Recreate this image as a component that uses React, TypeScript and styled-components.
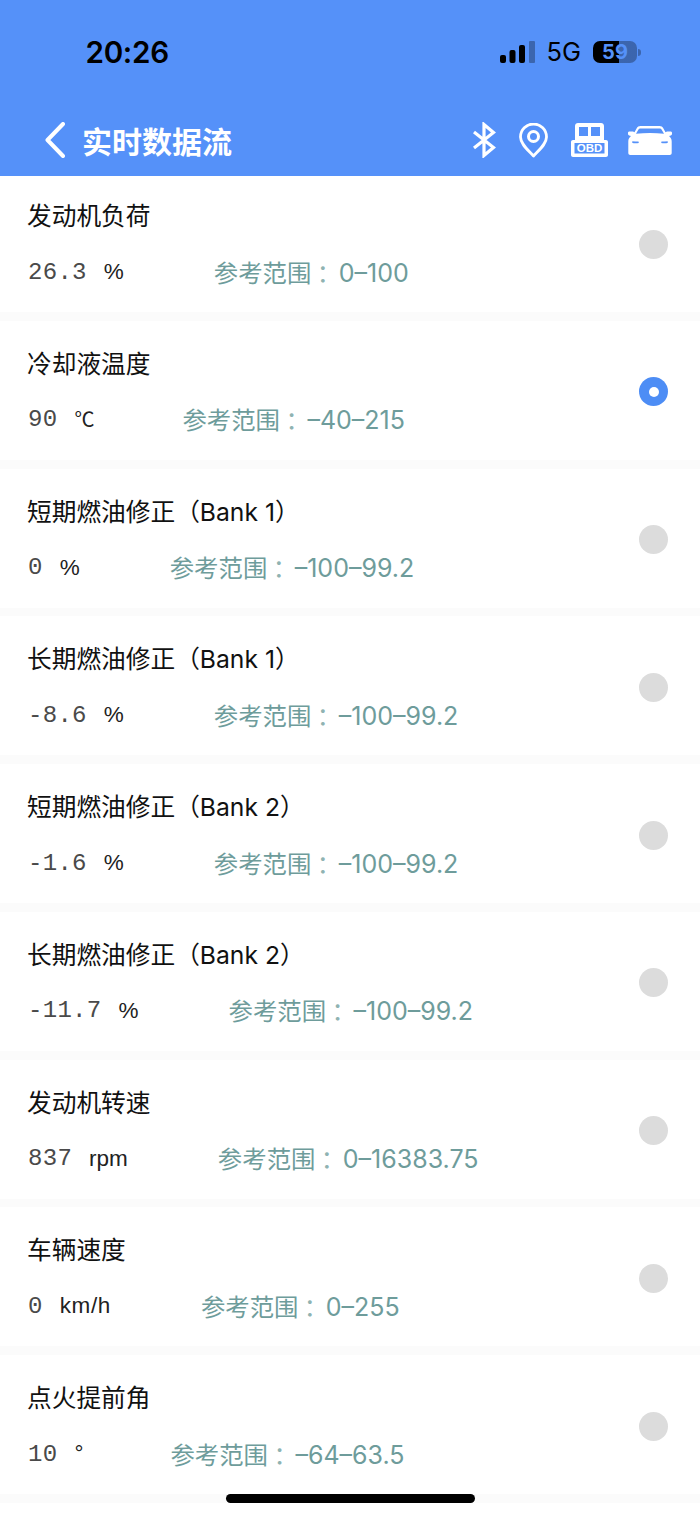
import React from 'react';
import styled, { createGlobalStyle } from 'styled-components';

const Global = createGlobalStyle`
  html, body { margin: 0; padding: 0; background: #fff; }
  body { width: 700px; height: 1517px; overflow: hidden; font-family: Inter, "Noto Sans CJK SC", sans-serif; }
`;
const Page = styled.div`position: relative; width: 700px; height: 1517px; background: #fff; overflow: hidden;`;
const Header = styled.header`height: 176px; background: #5591f9; display: flex; flex-direction: column;`;
const StatusBar = styled.div`height: 104px; display: flex; align-items: center; justify-content: space-between; padding: 0 59px 0 85.5px; box-sizing: border-box;`;
const Time = styled.div`font: 600 29.6px/1 Inter, sans-serif; color: #000; letter-spacing: -.3px; padding-top: 1px;`;
const StatusRight = styled.div`display: flex; align-items: center;`;
const Network = styled.div`font: 400 25.5px/1 Inter, sans-serif; color: #000; margin: 0 12px 0 11px;`;
const Battery = styled.div`
  width: 44px; height: 22px; border-radius: 7px; display: flex; align-items: center; justify-content: center;
  background: linear-gradient(90deg, #000 0 59%, rgba(0,0,0,.3) 59% 100%);
  font: 700 20px/1 Inter, sans-serif; color: #5591f9;
`;
const BatteryTip = styled.div`width: 3px; height: 7px; margin-left: 1px; border-radius: 0 3px 3px 0; background: rgba(0,0,0,.3);`;
const NavBar = styled.nav`flex: 1; display: flex; align-items: center; padding: 0 28px 0 45px;`;
const NavTitle = styled.h1`margin: 0 0 0 17px; flex: 1; font: 700 30px/1 "Noto Sans CJK SC", sans-serif; color: #fff;`;
const NavIcons = styled.div`display: flex; align-items: center; gap: 23px;`;
const List = styled.main`display: flex; flex-direction: column; gap: 8.75px; padding-bottom: 8.75px; background: #fbfbfb;`;
const Row = styled.section`
  display: flex; align-items: center; justify-content: space-between; background: #fff;
  padding: 26px 32px 23px 28px;
  &:first-child { padding-top: 23px; }
`;
const Info = styled.div`display: flex; flex-direction: column; gap: 22px;`;
const Title = styled.div`font: 400 24.7px/34px Inter, "Noto Sans CJK SC", sans-serif; color: #111; height: 34px; margin-left: -1px;`;
const ValueLine = styled.div`display: flex; align-items: center; height: 34px;`;
const Value = styled.span`font: 400 24px/34px "Liberation Mono", monospace; letter-spacing: .3px; color: #4a4a4a; margin-right: 17px; padding-top: 1px;`;
const Unit = styled.span<{ $size?: number; $track?: number }>`
  font: 400 ${p => p.$size ?? 22.5}px/34px "Liberation Sans", "Noto Sans CJK SC", sans-serif;
  letter-spacing: ${p => p.$track ?? 0}px;
  color: #222; margin-right: 90px;
`;
const Range = styled.span`font: 400 24.4px/34px "Noto Sans CJK SC", sans-serif; color: #6e9c9b; display: inline-flex; align-items: baseline;`;
const RangeColon = styled.span`width: 22px; padding-left: 5.400px; box-sizing: content-box; color: #8fb3b2;`;
const RangeNums = styled.span`font: 400 25px/34px Inter, sans-serif;`;
const Radio = styled.div<{ $on?: boolean }>`
  width: 29px; height: 29px; border-radius: 50%; flex: none; display: flex; align-items: center; justify-content: center;
  background: ${p => (p.$on ? '#4d8df5' : '#dcdcdc')};
  &::after { content: ''; width: 10px; height: 10px; border-radius: 50%; background: ${p => (p.$on ? '#fff' : 'transparent')}; }
`;
const HomeBar = styled.div`position: absolute; left: 226px; top: 1494px; width: 249px; height: 9px; border-radius: 5px; background: #000;`;
const ObdWrap = styled.div`position: relative; width: 37px; height: 34px; margin-right: -3px;`;
const ObdLabel = styled.span`position: absolute; left: 0; right: 0; bottom: 3px; text-align: center; font: 700 11.5px/12px "Liberation Sans", sans-serif; color: #fff;`;

const rows: { t: string; v: string; u: string; r: string; on?: boolean; size?: number; track?: number }[] = [
  { t: '发动机负荷', v: '26.3', u: '%', r: '0–100' },
  { t: '冷却液温度', v: '90', u: '℃', r: '–40–215', on: true, size: 20, track: -2 },
  { t: '短期燃油修正（Bank 1）', v: '0', u: '%', r: '–100–99.2' },
  { t: '长期燃油修正（Bank 1）', v: '-8.6', u: '%', r: '–100–99.2' },
  { t: '短期燃油修正（Bank 2）', v: '-1.6', u: '%', r: '–100–99.2' },
  { t: '长期燃油修正（Bank 2）', v: '-11.7', u: '%', r: '–100–99.2' },
  { t: '发动机转速', v: '837', u: 'rpm', r: '0–16383.75' },
  { t: '车辆速度', v: '0', u: 'km/h', r: '0–255', track: 0.6 },
  { t: '点火提前角', v: '10', u: '°', r: '–64–63.5', track: -3 },
];

const Signal = () => (
  <svg width="35" height="22" viewBox="0 0 35 22" style={{ marginLeft: 1 }}>
    <rect x="0" y="14" width="6" height="8" rx="2" fill="#000" />
    <rect x="9.500" y="9" width="6" height="13" rx="2" fill="#000" />
    <rect x="19" y="4" width="6" height="18" rx="2" fill="#000" />
    <rect x="29" y="0" width="6" height="22" rx="1" fill="#000" opacity=".3" />
  </svg>
);
const Chevron = () => (
  <svg width="20" height="36" viewBox="0 0 20 36" fill="none" stroke="#fff" strokeWidth="4" strokeLinecap="round" strokeLinejoin="round">
    <path d="M18 2 2.500 18 18 34" />
  </svg>
);
const BluetoothIcon = () => (
  <svg width="24" height="36" viewBox="0 0 24 36" fill="none" stroke="#fff" strokeWidth="3.200">
    <path d="M2 10 21.500 25.500 12 33.500V2.500l9.500 8L2 26" />
  </svg>
);
const Pin = () => (
  <svg width="29" height="35" viewBox="0 0 29 35" fill="none" stroke="#fff" strokeWidth="2.800">
    <path d="M14.500 33C9 27 1.500 21 1.500 14a13 13 0 0 1 26 0c0 7-7.500 13-13 19Z" strokeLinejoin="round" />
    <circle cx="14.500" cy="13.500" r="5" strokeWidth="3" />
  </svg>
);
const Obd = () => (
  <ObdWrap>
    <svg width="37" height="34" viewBox="0 0 37 34">
      <path
        fillRule="evenodd"
        fill="#fff"
        d="M7 0h23c1.700 0 3 1.300 3 3v14h2c1.100 0 2 .9 2 2v13c0 1.100-.9 2-2 2H2c-1.100 0-2-.9-2-2V19c0-1.100.9-2 2-2h2V3c0-1.700 1.300-3 3-3ZM8 4v9h9V4Zm12 0v9h9V4ZM3.500 20v10.500h30V20Z"
      />
    </svg>
    <ObdLabel>OBD</ObdLabel>
  </ObdWrap>
);
const Car = () => (
  <svg width="44" height="30" viewBox="0 -1 44 30">
    <path
      fillRule="evenodd"
      fill="#fff"
      d="M12.500 0h19c1.800 0 3 .8 3.800 2.300L37.500 6.200 39 5.500h3.500c.9 0 1.500.6 1.500 1.300V8c0 .9-.7 1.400-2 1.800l-1 .3c1.800 1.400 2.700 3.200 2.700 5.400V27c0 1.200-.8 2-2 2H2.300c-1.200 0-2-.8-2-2V15.500c0-2.200.9-4 2.700-5.400L2 9.800C.7 9.400 0 8.900 0 8V6.800C0 6.100.6 5.500 1.500 5.500H5l1.500.7 2.200-3.900C9.500.8 10.700 0 12.500 0Zm.2 2.400c-1.200 0-1.900.5-2.400 1.300L8 7.700c9-1 19-1 28 0l-2.300-4c-.5-.8-1.200-1.300-2.400-1.300ZM4.300 15.200v1.700c2.200.5 4.500.5 6.500 0l-.3-1.300c-2-.1-4.200-.2-6.200-.4Zm35.400 0c-2 .2-4.200.3-6.200.4l-.3 1.300c2 .5 4.300.5 6.500 0Z"
    />
  </svg>
);

export default function App() {
  return (
    <Page>
      <Global />
      <Header>
        <StatusBar>
          <Time>20:26</Time>
          <StatusRight>
            <Signal />
            <Network>5G</Network>
            <Battery>59</Battery>
            <BatteryTip />
          </StatusRight>
        </StatusBar>
        <NavBar>
          <Chevron />
          <NavTitle>实时数据流</NavTitle>
          <NavIcons>
            <BluetoothIcon />
            <Pin />
            <Obd />
            <Car />
          </NavIcons>
        </NavBar>
      </Header>
      <List>
        {rows.map(r => (
          <Row key={r.t}>
            <Info>
              <Title>{r.t}</Title>
              <ValueLine>
                <Value>{r.v}</Value>
                <Unit $size={r.size} $track={r.track}>{r.u}</Unit>
                <Range>参考范围<RangeColon>：</RangeColon><RangeNums>{r.r}</RangeNums></Range>
              </ValueLine>
            </Info>
            <Radio $on={r.on} />
          </Row>
        ))}
      </List>
      <HomeBar />
    </Page>
  );
}
